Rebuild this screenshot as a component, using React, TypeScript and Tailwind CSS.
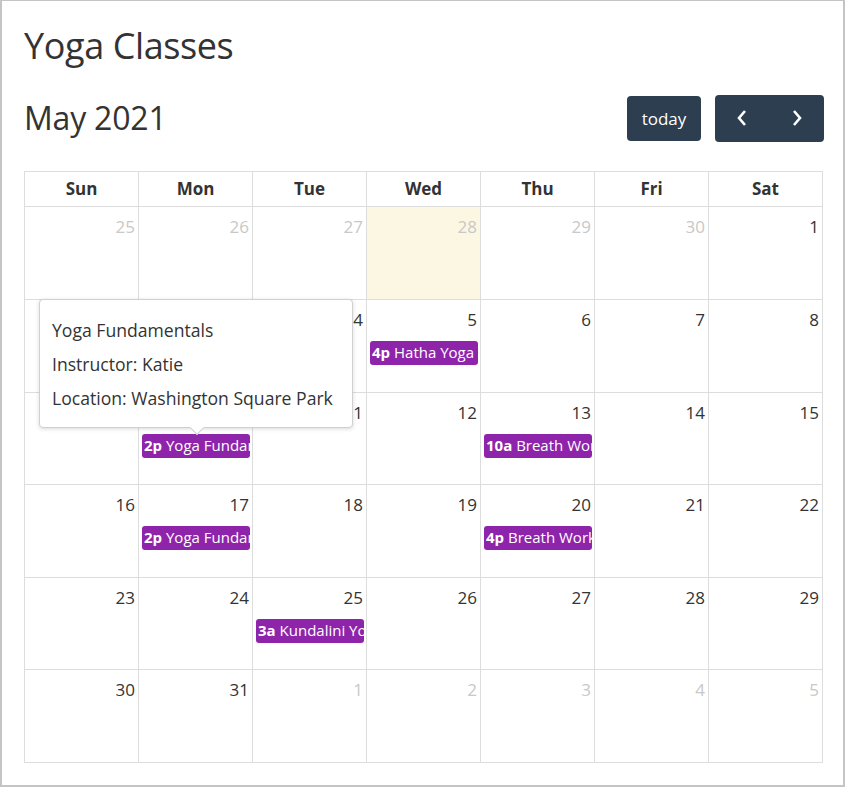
import React from "react";

type Ev = { time: string; title: string };
type Cell = { d: number; other?: boolean; today?: boolean; ev?: Ev };

const weeks: Cell[][] = [
  [
    { d: 25, other: true },
    { d: 26, other: true },
    { d: 27, other: true },
    { d: 28, other: true, today: true },
    { d: 29, other: true },
    { d: 30, other: true },
    { d: 1 },
  ],
  [
    { d: 2 },
    { d: 3 },
    { d: 4 },
    { d: 5, ev: { time: "4p", title: "Hatha Yoga" } },
    { d: 6 },
    { d: 7 },
    { d: 8 },
  ],
  [
    { d: 9 },
    { d: 10, ev: { time: "2p", title: "Yoga Fundamentals" } },
    { d: 11 },
    { d: 12 },
    { d: 13, ev: { time: "10a", title: "Breath Work" } },
    { d: 14 },
    { d: 15 },
  ],
  [
    { d: 16 },
    { d: 17, ev: { time: "2p", title: "Yoga Fundamentals" } },
    { d: 18 },
    { d: 19 },
    { d: 20, ev: { time: "4p", title: "Breath Work" } },
    { d: 21 },
    { d: 22 },
  ],
  [
    { d: 23 },
    { d: 24 },
    { d: 25, ev: { time: "3a", title: "Kundalini Yoga" } },
    { d: 26 },
    { d: 27 },
    { d: 28 },
    { d: 29 },
  ],
  [
    { d: 30 },
    { d: 31 },
    { d: 1, other: true },
    { d: 2, other: true },
    { d: 3, other: true },
    { d: 4, other: true },
    { d: 5, other: true },
  ],
];

const days = ["Sun", "Mon", "Tue", "Wed", "Thu", "Fri", "Sat"];

export default function App() {
  return (
    <div
      className="w-[845px] h-[787px] bg-white border-2 border-t border-[#c4c4c4] text-[#333]"
      style={{ fontFamily: '"Open Sans", "Noto Sans", sans-serif' }}
    >
      <div className="pl-[22px] pr-[19px] pt-[20px] relative">
        <h1 className="text-[36px] leading-[50px] font-normal tracking-[-0.4px]">Yoga Classes</h1>
        <div className="flex items-center justify-between mt-[23px] h-[48px] w-[800px]">
          <h2 className="text-[32px] leading-[40px] tracking-[-0.2px]">May 2021</h2>
          <div className="flex items-center gap-[14px]">
            <button className="h-[45px] w-[74px] rounded-[4px] bg-[#2c3e50] text-white text-[17px] leading-none">
              today
            </button>
            <div className="flex h-[47px] w-[109px] rounded-[4px] bg-[#2c3e50]">
              <button className="flex-1 flex items-center justify-center">
                <svg width="12" height="18" viewBox="0 0 12 18">
                  <polyline points="9,2 3,9 9,16" fill="none" stroke="white" strokeWidth="2.6" />
                </svg>
              </button>
              <button className="flex-1 flex items-center justify-center">
                <svg width="12" height="18" viewBox="0 0 12 18">
                  <polyline points="3,2 9,9 3,16" fill="none" stroke="white" strokeWidth="2.6" />
                </svg>
              </button>
            </div>
          </div>
        </div>

        <div className="mt-[29px] w-[799px] border-l border-t border-[#dddddd]">
          <div className="grid grid-cols-7">
            {days.map((d) => (
              <div
                key={d}
                className="h-[35px] border-r border-b border-[#dddddd] flex items-center justify-center font-bold text-[17px]"
              >
                {d}
              </div>
            ))}
          </div>
          {weeks.map((w, i) => (
            <div key={i} className={`grid grid-cols-7 ${i === 0 || i === 5 ? "h-[93px]" : "h-[92.6px]"}`}>
              {w.map((c, j) => (
                <div
                  key={j}
                  className={`border-r border-b border-[#dddddd] flex flex-col overflow-hidden ${
                    c.today ? "bg-[#fcf7e3]" : ""
                  }`}
                >
                  <div
                    className={`text-right pr-[3px] pt-[8px] text-[17px] leading-[24px] ${
                      c.other ? "text-[#c8c8c8]" : "text-[#333]"
                    }`}
                  >
                    {c.d}
                  </div>
                  {c.ev && (
                    <div className="mt-[9px] ml-[3px] mr-[2px] h-[24px] rounded-[3px] bg-[#8e24aa] text-white text-[15px] leading-[23px] px-[2px] whitespace-nowrap overflow-hidden">
                      <span className="font-bold">{c.ev.time}</span> {c.ev.title}
                    </div>
                  )}
                </div>
              ))}
            </div>
          ))}
        </div>

        <div className="absolute left-[37px] top-[298px] w-[314px] h-[129px] bg-white border border-[#d0d0d0] rounded-[4px] shadow-[0_1px_4px_rgba(0,0,0,0.15)] pl-[12px] pt-[13px] text-[17.6px] leading-[34px] text-[#333]">
          <div>Yoga Fundamentals</div>
          <div>Instructor: Katie</div>
          <div>Location: Washington Square Park</div>
          <div className="absolute left-[152px] -bottom-[6px] w-[10px] h-[10px] bg-white border-r border-b border-[#d0d0d0] rotate-45"></div>
        </div>
      </div>
    </div>
  );
}
